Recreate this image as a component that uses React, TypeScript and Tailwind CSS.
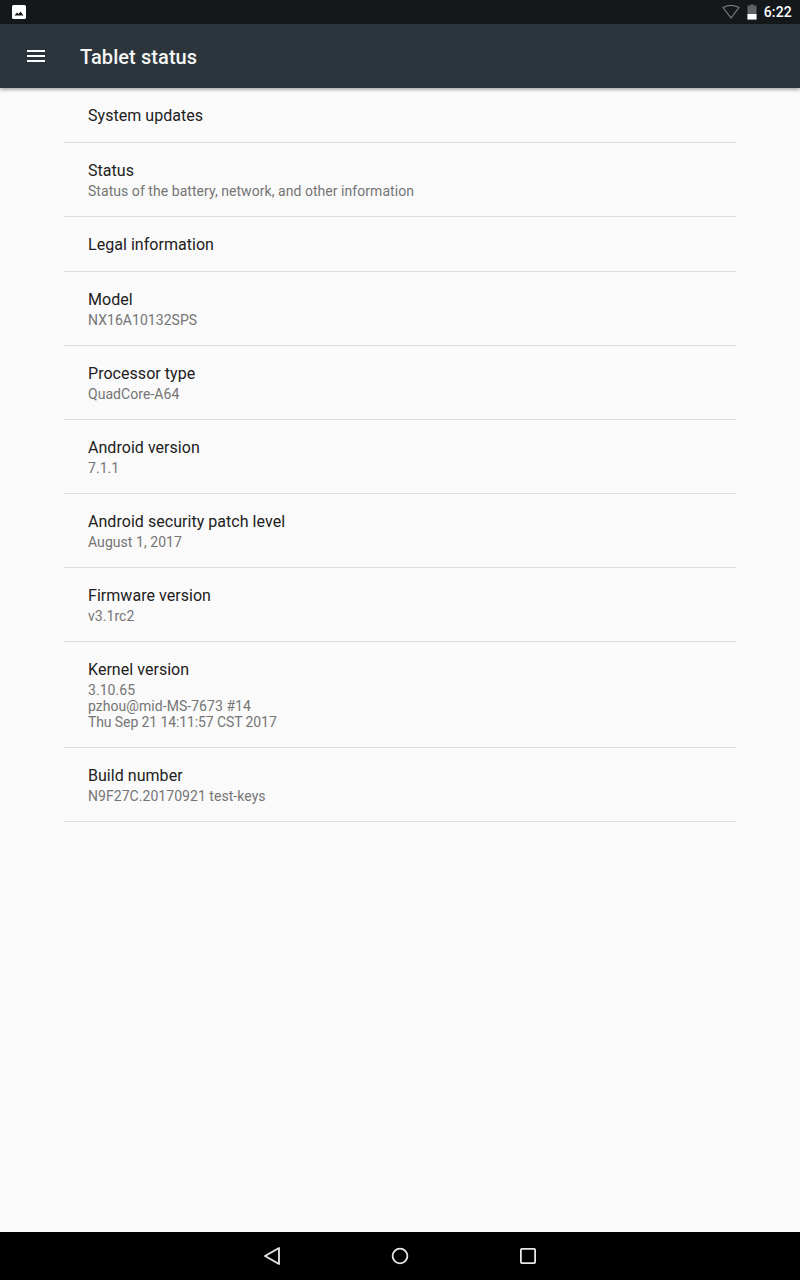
const rows = [
  { title: "System updates" },
  { title: "Status", summary: ["Status of the battery, network, and other information"] },
  { title: "Legal information" },
  { title: "Model", summary: ["NX16A10132SPS"] },
  { title: "Processor type", summary: ["QuadCore-A64"] },
  { title: "Android version", summary: ["7.1.1"] },
  { title: "Android security patch level", summary: ["August 1, 2017"] },
  { title: "Firmware version", summary: ["v3.1rc2"] },
  {
    title: "Kernel version",
    summary: ["3.10.65", "pzhou@mid-MS-7673 #14", "Thu Sep 21 14:11:57 CST 2017"],
  },
  { title: "Build number", summary: ["N9F27C.20170921 test-keys"] },
];

function StatusBar() {
  return (
    <div className="flex h-6 items-center justify-between bg-[#14181b] pl-3 pr-2">
      <svg width="14" height="14" viewBox="0 0 14 14">
        <rect width="14" height="14" rx="1.5" fill="#fff" />
        <path d="M2.5 10.5 L5 7.5 L6.5 9 L8.5 6.5 L11.5 10.5 Z" fill="#14181b" />
      </svg>
      <div className="flex items-center">
        <svg width="18" height="14" viewBox="0 0 18 14" fill="none">
          <path d="M1 2.5 Q9 -1.5 17 2.5 L9 13 Z" stroke="#7c8083" strokeWidth="1.2" strokeLinejoin="round" />
        </svg>
        <svg width="10" height="16" viewBox="0 0 10 16" className="ml-[7px]">
          <path d="M3.5 0.5 H6.5 V1.5 H9.5 V15.5 H0.5 V1.5 H3.5 Z" fill="#5f6366" />
          <rect x="0.5" y="10" width="9" height="5.5" fill="#fff" />
        </svg>
        <span className="ml-[7px] text-sm font-medium leading-6 tracking-[0.2px] text-white">6:22</span>
      </div>
    </div>
  );
}

function Toolbar() {
  return (
    <div className="relative z-10 flex h-16 items-center bg-[#2b353b] shadow-[0_2px_3px_rgba(0,0,0,0.3)]">
      <svg width="18" height="12" viewBox="0 0 18 12" className="ml-[27px]" fill="#fff">
        <rect y="0" width="18" height="2" />
        <rect y="5" width="18" height="2" />
        <rect y="10" width="18" height="2" />
      </svg>
      <h1 className="ml-[35px] mt-[2px] text-xl font-medium tracking-[0.08px] text-[#f4f5f5]">Tablet status</h1>
    </div>
  );
}

function NavBar() {
  return (
    <div className="flex h-12 items-center justify-center bg-black">
      <svg width="18" height="20" viewBox="0 0 18 20" fill="none">
        <path d="M15 2 V18 L1 10 Z" stroke="#e8e8e8" strokeWidth="1.8" strokeLinejoin="round" />
      </svg>
      <svg width="18" height="18" viewBox="0 0 18 18" fill="none" className="ml-[109px]">
        <circle cx="9" cy="9" r="7.4" stroke="#e8e8e8" strokeWidth="1.8" />
      </svg>
      <svg width="16" height="16" viewBox="0 0 16 16" fill="none" className="ml-[111px]">
        <rect x="0.9" y="0.9" width="14.2" height="14.2" rx="1" stroke="#e8e8e8" strokeWidth="1.8" />
      </svg>
    </div>
  );
}

export default function App() {
  return (
    <div className="flex h-[1280px] w-[800px] flex-col overflow-hidden bg-[#fafafa] font-['Roboto',sans-serif]">
      <StatusBar />
      <Toolbar />
      <div className="flex-1 px-16">
        {rows.map((row) => (
          <div
            key={row.title}
            className={`border-b border-[#dcdcdc] px-6 pt-[17px] ${row.summary ? "pb-[17px]" : "pb-[15px]"}`}
          >
            <div className="text-base leading-[22px] tracking-[0.04px] text-[#212121]">{row.title}</div>
            {row.summary && (
              <div className="mt-[1px] text-sm leading-4 tracking-[0.05px] text-[#757575]">
                {row.summary.map((line) => (
                  <div key={line} className={line.startsWith("Thu") ? "tracking-[-0.1px]" : ""}>
                    {line}
                  </div>
                ))}
              </div>
            )}
          </div>
        ))}
      </div>
      <NavBar />
    </div>
  );
}
